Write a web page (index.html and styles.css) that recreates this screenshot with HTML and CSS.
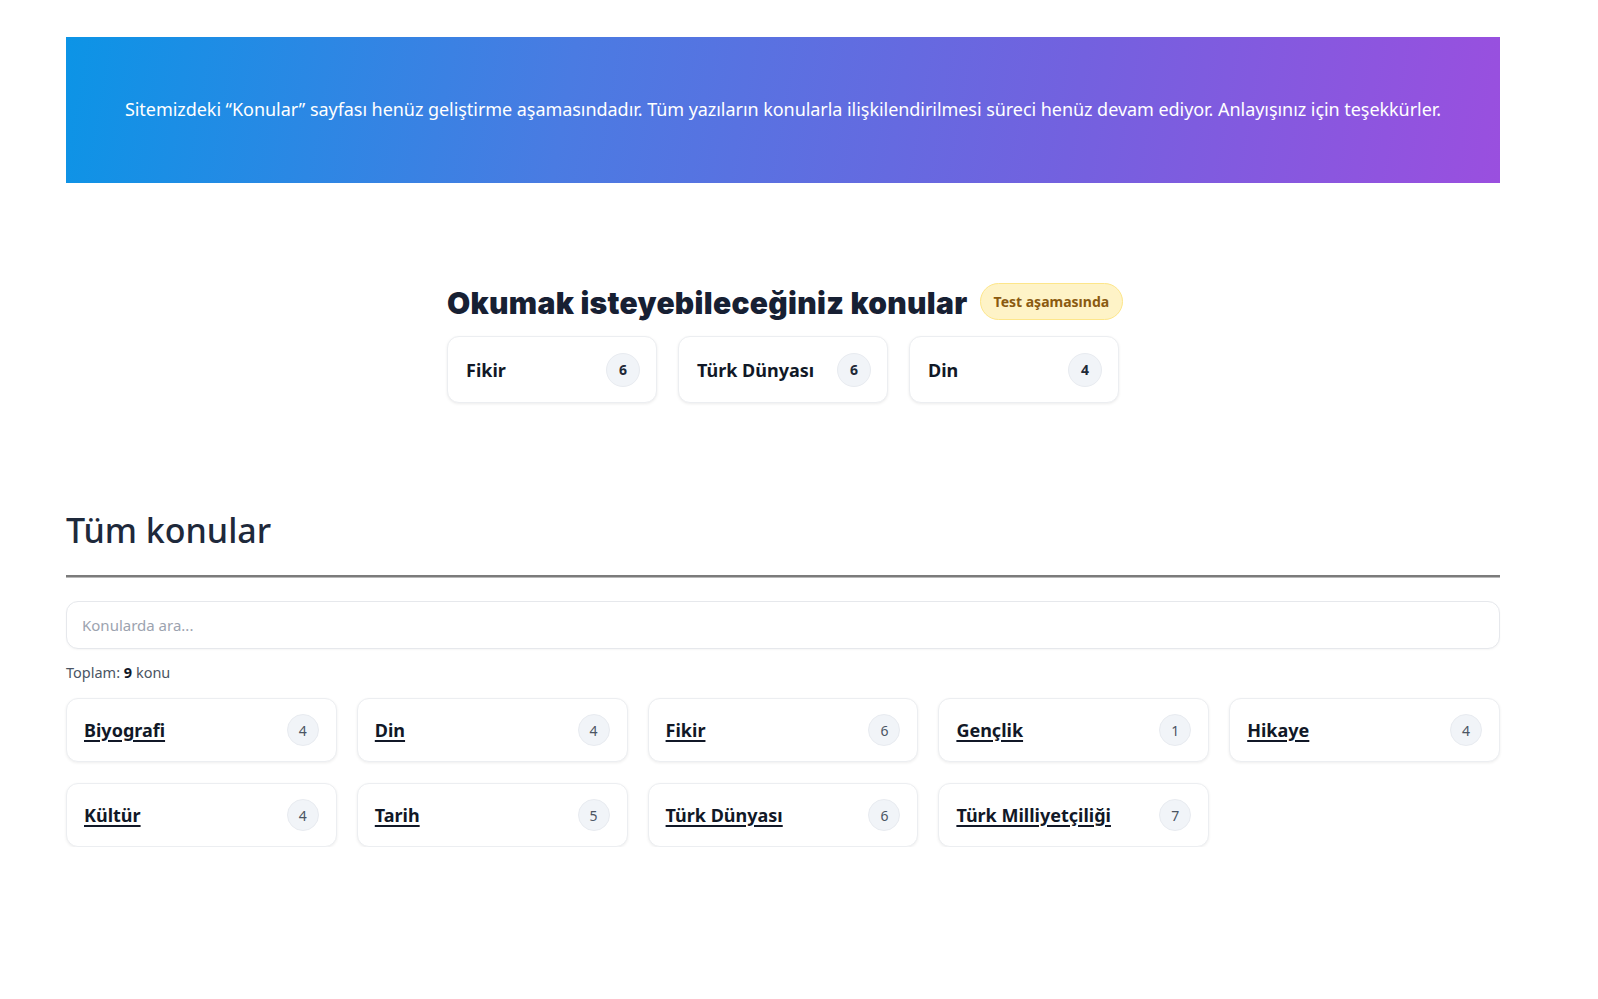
FILE: index.html
```html
<!DOCTYPE html>
<html lang="tr">
<head>
<meta charset="utf-8">
<title>Konular</title>
<link rel="stylesheet" href="styles.css">
</head>
<body>
<div class="page">
  <div class="notice">Sitemizdeki “Konular” sayfası henüz geliştirme aşamasındadır. Tüm yazıların konularla ilişkilendirilmesi süreci henüz devam ediyor. Anlayışınız için teşekkürler.</div>

  <section class="featured">
    <div class="featured-inner">
      <div class="featured-head">
        <h2 class="featured-title">Okumak isteyebileceğiniz konular</h2>
        <span class="badge">Test aşamasında</span>
      </div>
      <div class="featured-cards">
        <a class="fcard" href="#"><span class="fname">Fikir</span><span class="count">6</span></a>
        <a class="fcard" href="#"><span class="fname">Türk Dünyası</span><span class="count">6</span></a>
        <a class="fcard" href="#"><span class="fname">Din</span><span class="count">4</span></a>
      </div>
    </div>
  </section>

  <section class="all">
    <h1 class="all-title">Tüm konular</h1>
    <hr class="divider">
    <input class="search" type="text" placeholder="Konularda ara...">
    <p class="total">Toplam: <b>9</b> konu</p>
    <div class="grid">
      <a class="card" href="#"><span class="name">Biyografi</span><span class="count">4</span></a>
      <a class="card" href="#"><span class="name">Din</span><span class="count">4</span></a>
      <a class="card" href="#"><span class="name">Fikir</span><span class="count">6</span></a>
      <a class="card" href="#"><span class="name">Gençlik</span><span class="count">1</span></a>
      <a class="card" href="#"><span class="name">Hikaye</span><span class="count">4</span></a>
      <a class="card" href="#"><span class="name">Kültür</span><span class="count">4</span></a>
      <a class="card" href="#"><span class="name">Tarih</span><span class="count">5</span></a>
      <a class="card" href="#"><span class="name">Türk Dünyası</span><span class="count">6</span></a>
      <a class="card" href="#"><span class="name">Türk Milliyetçiliği</span><span class="count">7</span></a>
    </div>
  </section>
</div>
</body>
</html>
```

FILE: styles.css
```css
* { box-sizing: border-box; }
html, body { margin: 0; padding: 0; background: #ffffff; }
body {
  font-family: "Noto Sans", "Open Sans", sans-serif;
  color: #1f2937;
}
.page {
  width: 1434px;
  margin-left: 66px;
  padding-top: 37px;
}
.notice {
  height: 146px;
  display: flex;
  align-items: center;
  justify-content: center;
  background: linear-gradient(100deg, #0c94e6 0%, #4a7be2 35%, #7361df 70%, #9a4fdf 100%);
  color: #ffffff;
  font-size: 18px;
  letter-spacing: -0.05px;
  padding-bottom: 2px;
}
.featured {
  display: flex;
  justify-content: center;
  padding-top: 100px;
}
.featured-inner { width: 672px; }
.featured-head {
  display: flex;
  align-items: center;
  gap: 12px;
  height: 40px;
}
.featured-title {
  margin: 0;
  font-family: "Inter", "Lato", sans-serif;
  font-weight: 900;
  font-size: 30px;
  color: #172033;
  letter-spacing: 0.3px;
  white-space: nowrap;
}
.badge {
  display: inline-flex;
  align-items: center;
  height: 37px;
  padding: 0 13px;
  border-radius: 19px;
  background: #fef3c7;
  border: 1px solid #fde68a;
  color: #8a5a10;
  font-size: 14px;
  font-weight: 700;
  margin-top: -4px;
  white-space: nowrap;
}
.featured-cards {
  display: grid;
  grid-template-columns: repeat(3, 210px);
  gap: 21px;
  margin-top: 13px;
}
.fcard {
  height: 67px;
  display: flex;
  align-items: center;
  justify-content: space-between;
  padding: 0 16px 0 18px;
  border: 1px solid #eceef1;
  border-radius: 12px;
  background: #fff;
  box-shadow: 0 1px 3px rgba(0,0,0,0.08);
  text-decoration: none;
  color: #111827;
}
.fname { font-size: 18px; font-weight: 700; }
.count {
  width: 34px;
  height: 34px;
  border-radius: 50%;
  background: #f1f4f8;
  border: 1px solid #e8ebf0;
  display: flex;
  align-items: center;
  justify-content: center;
  font-size: 14px;
  font-weight: 400;
  color: #4b5563;
}
.fcard .count { font-weight: 700; color: #1f2937; }
.all { padding-top: 102px; }
.all-title {
  margin: 0;
  font-size: 34px;
  font-weight: 500;
  color: #1e293b;
  line-height: 50px;
}
.divider {
  margin: 20px 0 0;
  border: 0;
  border-top: 2px solid #7b7b7b;
  border-bottom: 1px solid #b9b9b9;
  height: 0;
}
.search {
  display: block;
  width: 100%;
  height: 48px;
  margin-top: 23px;
  border: 1px solid #e6e8ec;
  border-radius: 12px;
  padding: 0 15px;
  font-family: inherit;
  font-size: 15px;
  color: #1f2937;
  box-shadow: 0 1px 2px rgba(0,0,0,0.04);
  outline: none;
}
.search::placeholder { color: #9ca3af; }
.total {
  margin: 13px 0 0;
  font-size: 14.5px;
  color: #4b5563;
}
.total b { color: #111827; font-weight: 700; }
.grid {
  display: grid;
  grid-template-columns: repeat(5, 1fr);
  column-gap: 20px;
  row-gap: 21px;
  margin-top: 16px;
}
.card {
  height: 64px;
  display: flex;
  align-items: center;
  justify-content: space-between;
  padding: 0 17px 0 17px;
  border: 1px solid #eceef1;
  border-radius: 12px;
  background: #fff;
  box-shadow: 0 1px 3px rgba(0,0,0,0.07);
  color: #111827;
  text-decoration: none;
}
.card .name {
  font-size: 18px;
  font-weight: 700;
  text-decoration: underline;
  text-underline-offset: 3px;
  text-decoration-thickness: 2px;
}
.card .count { width: 32px; height: 32px; }
```
